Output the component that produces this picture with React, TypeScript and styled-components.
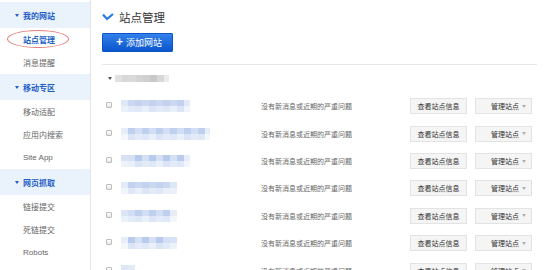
import React from "react";
import styled, { createGlobalStyle } from "styled-components";

const GlobalStyle = createGlobalStyle`
  html, body { margin: 0; padding: 0; background: #fff; overflow: hidden; }
  body { font-family: "Liberation Sans", "Noto Sans CJK SC", sans-serif; }
  * { box-sizing: border-box; }
`;

const Page = styled.div`
  display: flex;
  width: 545px;
  height: 270px;
  overflow: hidden;
`;

const Sidebar = styled.nav`
  width: 91px;
  flex: none;
  padding-top: 2px;
  border-right: 1px solid #e4e4e4;
  background: #fff;
`;

const SectionHeader = styled.div`
  height: 26px;
  display: flex;
  align-items: center;
  gap: 4px;
  padding-left: 15px;
  background: #eaf3fc;
  color: #1f5ec6;
  font-size: 8px;
  font-weight: bold;
`;

const Caret = styled.span<{ $color: string }>`
  width: 0;
  height: 0;
  border-left: 2px solid transparent;
  border-right: 2px solid transparent;
  border-top: 3px solid ${(p) => p.$color};
`;

const NavItem = styled.div<{ $active?: boolean }>`
  position: relative;
  height: 23px;
  display: flex;
  align-items: center;
  padding-left: 23px;
  font-size: 8px;
  color: ${(p) => (p.$active ? "#2160c4" : "#666")};
  font-weight: ${(p) => (p.$active ? "bold" : "normal")};
`;

const Annotation = styled.span`
  position: absolute;
  left: 7px;
  top: 2px;
  width: 62px;
  height: 18px;
  border: 1px solid #e47b7b;
  border-radius: 50%;
`;

const Main = styled.main`
  flex: 1;
  padding: 0 8px 0 11px;
  min-width: 0;
`;

const Header = styled.header`
  display: flex;
  flex-direction: column;
  align-items: flex-start;
  gap: 5px;
  padding: 6px 0 12px;
  border-bottom: 1px solid #e6e6e6;
`;

const TitleRow = styled.div`
  height: 22px;
  display: flex;
  align-items: center;
  gap: 5px;
`;

const Title = styled.h1`
  margin: 0;
  font-size: 11.5px;
  font-weight: normal;
  color: #333;
`;

const AddButton = styled.button`
  width: 71px;
  height: 19px;
  display: flex;
  align-items: center;
  gap: 3px;
  padding: 0 0 0 13px;
  border: 1px solid #0c55c9;
  border-radius: 1px;
  background: linear-gradient(#3381ea, #0a55cd);
  color: #fff;
  font-family: inherit;
  font-size: 9px;
  cursor: pointer;
`;

const PlusMark = styled.span`
  font-size: 12px;
  font-weight: bold;
  line-height: 1;
  margin-top: -1px;
`;

const GroupRow = styled.div`
  height: 27.45px;
  display: flex;
  align-items: center;
  gap: 3px;
  padding-left: 6px;
`;

const SiteRow = styled.div`
  height: 27.45px;
  display: flex;
  align-items: center;
  padding-left: 4px;
`;

const Checkbox = styled.span`
  width: 6px;
  height: 6px;
  flex: none;
  margin: -2px 9px 0 0;
  border: 1px solid #bdbdbd;
  border-radius: 1px;
  background: linear-gradient(#fff, #e6e6e6);
`;

const NameCell = styled.div`
  width: 140px;
  flex: none;
  display: flex;
  align-items: center;
`;

const Status = styled.div`
  width: 149px;
  flex: none;
  font-size: 7px;
  color: #666;
`;

const Actions = styled.div`
  display: flex;
  gap: 8px;
`;

const ActionButton = styled.button<{ $menu?: boolean }>`
  width: 57px;
  height: 16px;
  display: flex;
  align-items: center;
  justify-content: ${(p) => (p.$menu ? "flex-start" : "center")};
  padding: ${(p) => (p.$menu ? "0 5px 0 15px" : "0")};
  border: 1px solid #e3e3e3;
  background: #f5f5f5;
  color: #333;
  font-family: inherit;
  font-size: 7px;
  cursor: pointer;
`;

const MenuArrow = styled.span`
  margin-left: auto;
  width: 0;
  height: 0;
  border-left: 2px solid transparent;
  border-right: 2px solid transparent;
  border-top: 3px solid #b0b0b0;
`;

const MosaicGrid = styled.div`
  display: flex;
  flex-direction: column;
`;

const MosaicLine = styled.div`
  display: flex;
`;

const Cell = styled.span<{ $h: number }>`
  display: block;
  height: ${(p) => p.$h}px;
`;

const blueTop = ["#c3d3ef", "#d2def3", "#b8caed", "#cbd8f1", "#bfd0ee", "#d6e0f4"];
const blueBottom = ["#e3ebf8", "#dbe5f6", "#eaf0fa", "#dfe8f7"];
const grays = ["#d4d4d4", "#c8c8c8", "#dadada", "#cfcfcf", "#d8d8d8"];

function Mosaic({ width, tone, seed }: { width: number; tone: "blue" | "gray"; seed: number }) {
  const cell = 7;
  const count = Math.max(1, Math.ceil(width / cell));
  const lines = tone === "blue" ? [blueTop, blueBottom] : [grays];
  return (
    <MosaicGrid>
      {lines.map((pal, li) => (
        <MosaicLine key={li}>
          {Array.from({ length: count }).map((_, i) => {
            const w = i === count - 1 ? width - cell * (count - 1) : cell;
            const edge = i === 0 || i === count - 1;
            return (
              <Cell
                key={i}
                $h={tone === "blue" ? 6 : 7}
                style={{
                  width: w,
                  background: pal[(i * 3 + seed + li) % pal.length],
                  opacity: edge ? 0.55 : 1,
                }}
              />
            );
          })}
        </MosaicLine>
      ))}
    </MosaicGrid>
  );
}

const sections = [
  { title: "我的网站", items: ["站点管理", "消息提醒"] },
  { title: "移动专区", items: ["移动适配", "应用内搜索", "Site App"] },
  { title: "网页抓取", items: ["链接提交", "死链提交", "Robots"] },
];

const siteWidths = [69, 89, 69, 56, 56, 56, 14];

function TitleIcon() {
  return (
    <svg width="12" height="8" viewBox="0 0 12 8">
      <polyline points="1,1.5 5,6 11,1" fill="none" stroke="#2a7be2" strokeWidth="2.2" />
    </svg>
  );
}

export default function App() {
  return (
    <>
      <GlobalStyle />
      <Page>
        <Sidebar>
          {sections.map((s) => (
            <div key={s.title}>
              <SectionHeader>
                <Caret $color="#1f5ec6" />
                {s.title}
              </SectionHeader>
              {s.items.map((it) => (
                <NavItem key={it} $active={it === "站点管理"}>
                  {it}
                  {it === "站点管理" && <Annotation />}
                </NavItem>
              ))}
            </div>
          ))}
        </Sidebar>
        <Main>
          <Header>
            <TitleRow>
              <TitleIcon />
              <Title>站点管理</Title>
            </TitleRow>
            <AddButton>
              <PlusMark>+</PlusMark>
              添加网站
            </AddButton>
          </Header>
          <GroupRow>
            <Caret $color="#555" />
            <Mosaic width={54} tone="gray" seed={1} />
          </GroupRow>
          {siteWidths.map((w, i) => (
            <SiteRow key={i}>
              <Checkbox />
              <NameCell>
                <Mosaic width={w} tone="blue" seed={i} />
              </NameCell>
              <Status>没有新消息或近期的严重问题</Status>
              <Actions>
                <ActionButton>查看站点信息</ActionButton>
                <ActionButton $menu>
                  管理站点
                  <MenuArrow />
                </ActionButton>
              </Actions>
            </SiteRow>
          ))}
        </Main>
      </Page>
    </>
  );
}
